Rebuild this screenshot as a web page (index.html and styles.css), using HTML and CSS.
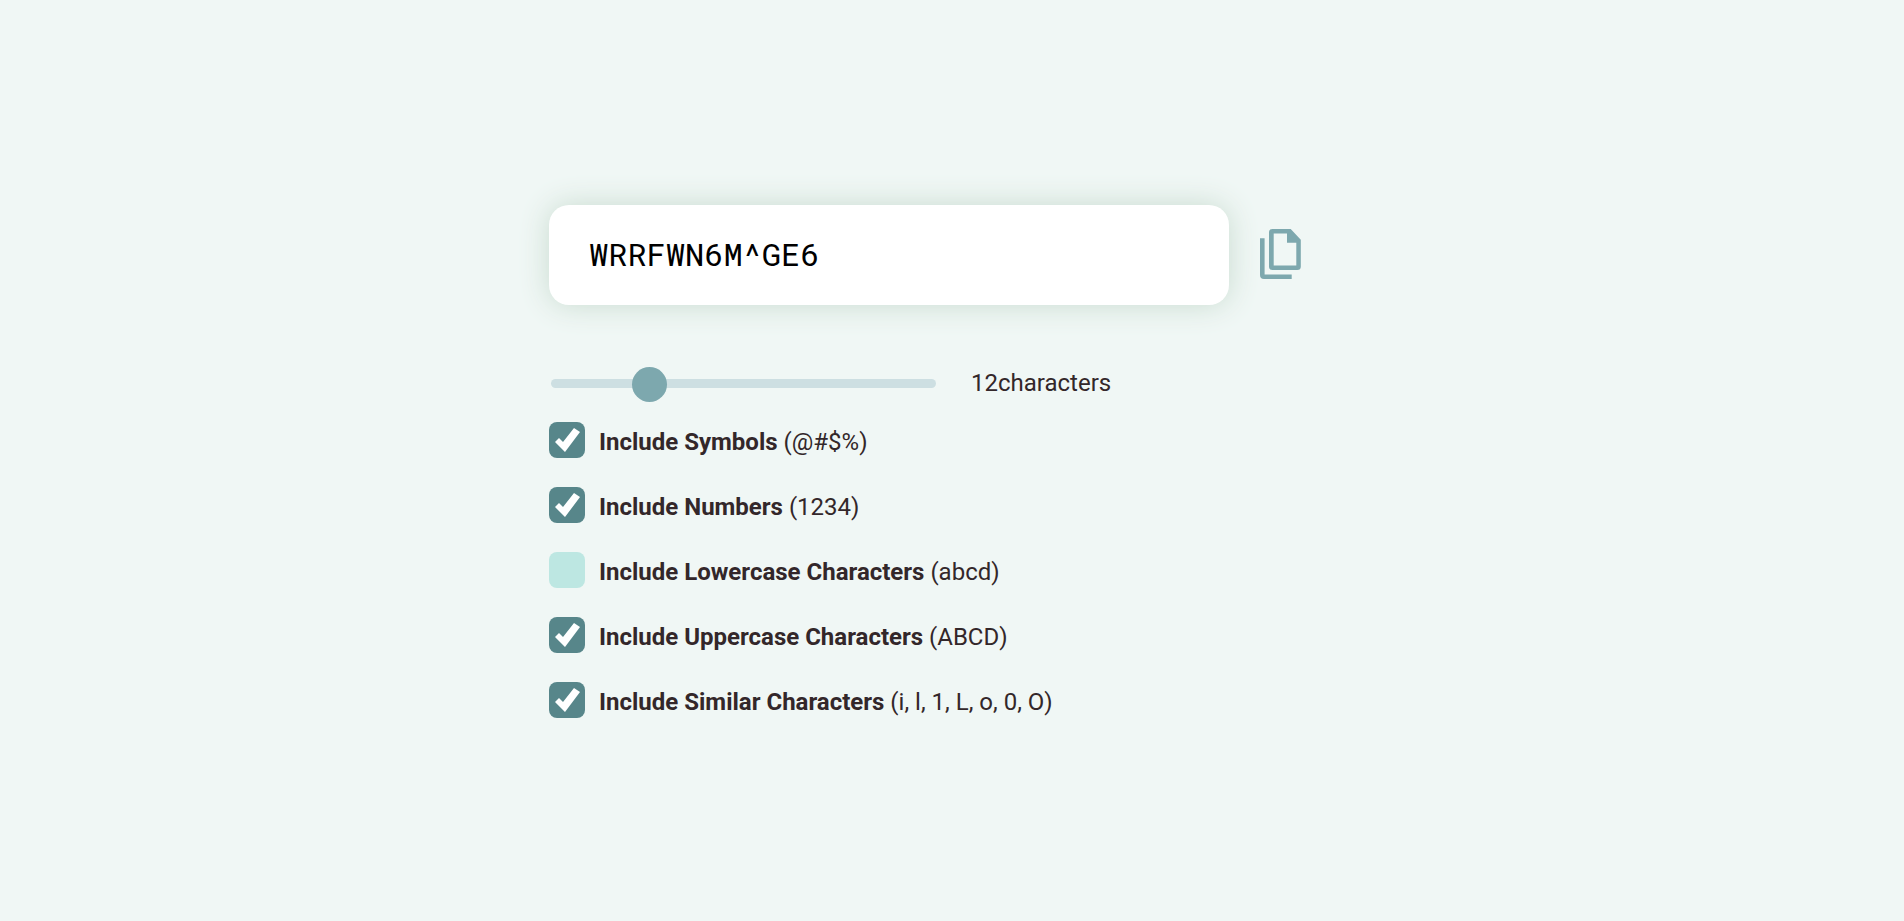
FILE: index.html
```html
<!DOCTYPE html>
<html lang="en">
<head>
<meta charset="utf-8">
<meta name="viewport" content="width=device-width, initial-scale=1">
<title>Password Generator</title>
<link rel="stylesheet" href="styles.css">
</head>
<body>
<main class="generator">
  <div class="result">
    <input class="password" type="text" value="WRRFWN6M^GE6" aria-label="Generated password" readonly>
    <button class="copy" type="button" aria-label="Copy password">
      <svg class="copy-icon" viewBox="0 0 41 50" aria-hidden="true">
        <path fill-rule="evenodd" d="M12.5 0H30.7L40.8 10.7V37.5Q40.8 41 37.3 41H12.5Q9 41 9 37.5V3.5Q9 0 12.5 0ZM13.7 4.6V36.4H36.3V13.7H27V4.6Z"/>
        <path d="M0 9.3H4.6V45.4H31.7V50H4Q0 50 0 46Z"/>
      </svg>
    </button>
  </div>
  <div class="length">
    <input class="slider" id="length" type="range" min="6" max="32" value="12">
    <label for="length">12characters</label>
  </div>
  <div class="options">
    <label class="option"><input class="check" type="checkbox" checked><span><b>Include Symbols</b> (@#$%)</span></label>
    <label class="option"><input class="check" type="checkbox" checked><span><b>Include Numbers</b> (1234)</span></label>
    <label class="option"><input class="check" type="checkbox"><span><b>Include Lowercase Characters</b> (abcd)</span></label>
    <label class="option"><input class="check" type="checkbox" checked><span><b>Include Uppercase Characters</b> (ABCD)</span></label>
    <label class="option"><input class="check" type="checkbox" checked><span><b>Include Similar Characters</b> (i, l, 1, L, o, 0, O)</span></label>
  </div>
</main>
</body>
</html>
```
FILE: styles.css
```css
* {
  box-sizing: border-box;
}

body {
  display: flex;
  align-items: center;
  justify-content: center;
  min-height: 100vh;
  margin: 0;
  background: #f0f7f5;
  color: #33272a;
  font: 400 24px/36px Roboto, sans-serif;
}

.generator {
  width: 100%;
  max-width: 806px;
  padding-top: 6px;
}

.result {
  display: flex;
  align-items: center;
  gap: 31px;
}

.password {
  width: 100%;
  max-width: 680px;
  padding: 28px 40px 30px;
  border: 0;
  border-radius: 20px;
  background: #fff;
  box-shadow: 0 0 30px #c8dbcf;
  color: #000;
  font: 400 32px/42px "Roboto Mono", "DejaVu Sans Mono", monospace;
}

.copy {
  padding: 0 0 2px;
  border: 0;
  background: none;
  cursor: pointer;
}

.copy-icon {
  display: block;
  width: 41px;
  height: 50px;
  fill: #7da8ae;
}

.length {
  display: flex;
  align-items: center;
  gap: 35px;
  margin-top: 60px;
  padding-left: 2px;
}

.slider {
  appearance: none;
  width: 385px;
  height: 9px;
  margin: 0;
  border-radius: 5px;
  background: #cddfe2;
}

.slider::-webkit-slider-thumb {
  appearance: none;
  width: 35px;
  height: 35px;
  margin-top: 2px;
  border-radius: 50%;
  background: #7da8ae;
}

.options {
  display: grid;
  gap: 25px;
  margin-top: 21px;
}

.option {
  display: flex;
  gap: 14px;
  justify-self: start;
  line-height: 40px;
}

.option b {
  font-weight: 700;
}

.check {
  appearance: none;
  flex: none;
  width: 36px;
  height: 36px;
  margin: 0;
  border-radius: 8px;
  background: #bde7e2;
}

.check:checked {
  background: #57868a;
}

.check:checked::before {
  content: "";
  display: block;
  width: 36px;
  height: 36px;
  background: #fff;
  clip-path: polygon(6px 20px, 10px 16px, 14px 20px, 25px 6px, 31px 10px, 16px 30px);
}
```
